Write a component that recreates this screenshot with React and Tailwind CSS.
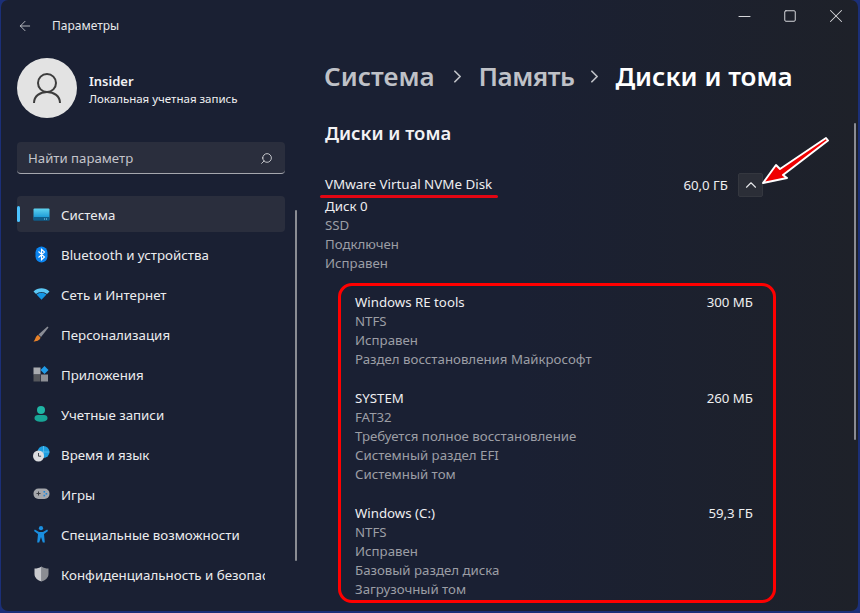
import { ChevronRight, ChevronUp, ArrowLeft, Search, Minus, Square, X } from 'lucide-react';

const font = 'font-["Noto_Sans","Open_Sans",sans-serif]';

const SystemIcon = () => (
  <svg width="17" height="13" viewBox="0 0 17 13">
    <defs>
      <linearGradient id="sys" x1="0" y1="0" x2="0" y2="1">
        <stop offset="0" stopColor="#5fd3f0" />
        <stop offset="0.7" stopColor="#1f9ed8" />
        <stop offset="1" stopColor="#10577f" />
      </linearGradient>
    </defs>
    <rect width="16" height="12" x="0.5" y="0.5" rx="1" fill="url(#sys)" />
    <rect x="0.5" y="9" width="16" height="3.5" fill="#0f5f8c" />
    <rect x="11" y="10.5" width="1" height="1" fill="#8fd8f0" />
    <rect x="13" y="10.5" width="1" height="1" fill="#8fd8f0" />
  </svg>
);

const BluetoothIcon = () => (
  <svg width="13" height="17" viewBox="0 0 13 17">
    <rect width="12" height="16" x="0.5" y="0.5" rx="6" fill="#0a84f0" />
    <path d="M3.5 5.5l6 5.5-3 2.7V3.3l3 2.7-6 5.5" fill="none" stroke="#fff" strokeWidth="1.1" />
  </svg>
);

const WifiIcon = () => (
  <svg width="17" height="12" viewBox="0 0 17 12">
    <path d="M0.5 3.5C5 -0.8 12 -0.8 16.5 3.5L14 6C10.8 3.2 6.2 3.2 3 6z" fill="#5cc8f5" />
    <path d="M3.5 6.5C6.4 4 10.6 4 13.5 6.5L8.5 11.8z" fill="#1597e5" />
  </svg>
);

const BrushIcon = () => (
  <svg width="16" height="16" viewBox="0 0 16 16">
    <path d="M14.5 0.5L15.5 1.5L8 11L5.5 8.5z" fill="#8a8d96" />
    <path d="M5 9L7.5 11.5C7 14.5 3 15.5 0.5 15.5C2.5 14 2.5 10 5 9z" fill="#e8822a" />
  </svg>
);

const AppsIcon = () => (
  <svg width="16" height="16" viewBox="0 0 16 16">
    <rect x="0.5" y="1.5" width="7" height="7" fill="#a9abb0" />
    <rect x="0.5" y="8.5" width="7" height="7" fill="#55575c" />
    <rect x="8" y="8.5" width="7" height="7" fill="#8e9096" />
    <path d="M11.5 0L15.5 4L11.5 8L7.5 4z" fill="#1f9be8" />
  </svg>
);

const UserIcon = () => (
  <svg width="14" height="16" viewBox="0 0 14 16">
    <circle cx="7" cy="4" r="4" fill="#1fb5a5" />
    <path d="M0.5 12C0.5 10 2 9 4 9H10C12 9 13.5 10 13.5 12C13.5 14.5 11 15.8 7 15.8C3 15.8 0.5 14.5 0.5 12z" fill="#18a596" />
  </svg>
);

const TimeIcon = () => (
  <svg width="17" height="16" viewBox="0 0 17 16">
    <circle cx="10.5" cy="6" r="6" fill="#1f9fe0" />
    <path d="M10.5 0v12M4.5 6h12" stroke="#7ccdf2" strokeWidth="0.6" />
    <circle cx="5.5" cy="10" r="5.5" fill="#dcdde0" />
    <path d="M5.5 7v3.2h2.6" fill="none" stroke="#44464c" strokeWidth="1" />
  </svg>
);

const GamesIcon = () => (
  <svg width="17" height="12" viewBox="0 0 17 12">
    <rect x="0.5" y="0.5" width="16" height="10.5" rx="5" fill="#a5a7ac" />
    <path d="M3.5 5.5h4M5.5 3.5v4" stroke="#3b3d42" strokeWidth="1" />
    <rect x="10.5" y="3" width="1.6" height="1.6" fill="#1f85d8" />
    <rect x="12.6" y="5" width="1.6" height="1.6" fill="#1f85d8" />
    <rect x="10.5" y="6.8" width="1.6" height="1.6" fill="#1f85d8" />
  </svg>
);

const AccessIcon = () => (
  <svg width="14" height="17" viewBox="0 0 14 17">
    <circle cx="7" cy="2.2" r="2.1" fill="#1a8fe0" />
    <path d="M0.8 3.5L5 6H9L13.2 3.5L14 5L10 8L10.8 16.5H8.8L7 11L5.2 16.5H3.2L4 8L0 5z" fill="#1a8fe0" />
  </svg>
);

const ShieldIcon = () => (
  <svg width="15" height="16" viewBox="0 0 15 16">
    <path d="M7.5 0.5C9.5 2 12 2.5 14.5 2.5V8C14.5 12 11 14.5 7.5 15.5z" fill="#8b8d93" />
    <path d="M7.5 0.5C5.5 2 3 2.5 0.5 2.5V8C0.5 12 4 14.5 7.5 15.5z" fill="#c9cace" />
  </svg>
);

const navItems = [
  { label: 'Система', icon: <SystemIcon />, active: true },
  { label: 'Bluetooth и устройства', icon: <BluetoothIcon /> },
  { label: 'Сеть и Интернет', icon: <WifiIcon /> },
  { label: 'Персонализация', icon: <BrushIcon /> },
  { label: 'Приложения', icon: <AppsIcon /> },
  { label: 'Учетные записи', icon: <UserIcon /> },
  { label: 'Время и язык', icon: <TimeIcon /> },
  { label: 'Игры', icon: <GamesIcon /> },
  { label: 'Специальные возможности', icon: <AccessIcon /> },
  { label: 'Конфиденциальность и безопас', icon: <ShieldIcon /> },
];

const partitions = [
  {
    name: 'Windows RE tools',
    size: '300 МБ',
    lines: ['NTFS', 'Исправен', 'Раздел восстановления Майкрософт'],
  },
  {
    name: 'SYSTEM',
    size: '260 МБ',
    lines: ['FAT32', 'Требуется полное восстановление', 'Системный раздел EFI', 'Системный том'],
  },
  {
    name: 'Windows (C:)',
    size: '59,3 ГБ',
    lines: ['NTFS', 'Исправен', 'Базовый раздел диска', 'Загрузочный том'],
  },
];

function NavItem({ item }) {
  return (
    <div
      className={`relative mb-1 flex h-9 w-[268px] shrink-0 items-center rounded ${
        item.active ? 'bg-[#2a2e3d]' : ''
      }`}
    >
      {item.active ? (
        <span className="absolute left-0 top-[10px] h-4 w-[3px] rounded bg-[#4cc2ff]" />
      ) : null}
      <span className="flex w-[44px] shrink-0 justify-center pl-[4px]">{item.icon}</span>
      <span className="w-[204px] overflow-hidden whitespace-nowrap pt-[4px] text-[13.3px] text-[#ececee]">
        {item.label}
      </span>
    </div>
  );
}

function Sidebar() {
  return (
    <aside className="flex w-[299px] shrink-0 flex-col pl-[16px]">
      <div className="flex h-[51px] items-center">
        <ArrowLeft size={16} strokeWidth={1.2} className="text-[#d8d9dd]" />
        <span className="ml-[19px] text-[12px] text-[#e6e7ea]">Параметры</span>
      </div>
      <div className="mt-[7px] flex items-center">
        <div className="flex h-[60px] w-[60px] items-center justify-center rounded-full bg-[#e3e3e3]">
          <svg width="28" height="31" viewBox="0 0 28 31" fill="none" stroke="#3d3d3d" strokeWidth="2">
            <circle cx="14" cy="10" r="9" />
            <path d="M1 30C1 23 7 19 14 19C21 19 27 23 27 30" />
          </svg>
        </div>
        <div className="ml-[12px] pt-[2px]">
          <div className="text-[13px] font-semibold leading-[18px] text-[#f2f2f4]">Insider</div>
          <div className="text-[11.5px] leading-[17px] text-[#f0f0f2]">Локальная учетная запись</div>
        </div>
      </div>
      <div className="mt-[24px] flex h-[32px] w-[268px] items-center justify-between rounded border-b border-b-[#a5a7ae] bg-[#2a2e3d] pl-[11px] pr-[12px] pt-[2px]">
        <span className="text-[13.2px] text-[#c4c5cb]">Найти параметр</span>
        <Search size={13} strokeWidth={1.5} className="-scale-x-100 text-[#e4e5e8]" />
      </div>
      <nav className="mt-[22px] flex flex-col">
        {navItems.map((item) => (
          <NavItem key={item.label} item={item} />
        ))}
      </nav>
    </aside>
  );
}

function InfoBlock({ name, size, lines }) {
  return (
    <div className="mb-[20px] flex justify-between">
      <div>
        <div className="h-[19px] text-[#eeeef0]">{name}</div>
        {lines.map((line, i) => (
          <div key={i} className="h-[19px] text-[#9c9ea5]">
            {line}
          </div>
        ))}
      </div>
      <div className="text-[#eeeef0]">{size}</div>
    </div>
  );
}

function Content() {
  return (
    <main className="min-w-0 flex-1 pl-[25px] text-[13.25px] leading-[19px]">
      <div className="-ml-[1px] mt-[58px] flex h-[36px] items-center whitespace-nowrap text-[26px] font-semibold leading-[36px]">
        <span className="text-[#bfc1c7]">Система</span>
        <ChevronRight size={21} strokeWidth={2} className="ml-[12px] mr-[11px] text-[#bfc1c7]" />
        <span className="tracking-[-0.5px] text-[#bfc1c7]">Память</span>
        <ChevronRight size={21} strokeWidth={2} className="mx-[10px] text-[#bfc1c7]" />
        <span className="text-white">Диски и тома</span>
      </div>
      <h2 className="mt-[27px] text-[18.5px] font-semibold leading-[24px] text-[#f2f2f4]">Диски и тома</h2>

      <div className="mt-[28px] flex w-[438px] items-start justify-between">
        <div className="h-[22px] text-[13.4px] leading-[22px] text-[#eeeef0]">VMware Virtual NVMe Disk</div>
        <div className="flex items-center gap-[10px]">
          <span className="leading-[22px] text-[#eeeef0]">60,0 ГБ</span>
          <span className="flex h-6 w-[25px] items-center justify-center rounded-[2px] border border-[#34373f] bg-[#2b2e37]">
            <ChevronUp size={18} strokeWidth={1.5} className="text-[#e6e7ea]" />
          </span>
        </div>
      </div>
      <div className="h-[19px] text-[#eeeef0]">Диск 0</div>
      <div className="h-[19px] text-[#9c9ea5]">SSD</div>
      <div className="h-[19px] text-[#9c9ea5]">Подключен</div>
      <div className="h-[19px] text-[#9c9ea5]">Исправен</div>

      <section className="ml-[13px] mt-[10px] h-[320px] w-[438px] rounded-[14px] border-[3px] border-[#ff0000] pl-[14px] pr-[20px] pt-[7px]">
        {partitions.map((p) => (
          <InfoBlock key={p.name} {...p} />
        ))}
      </section>
    </main>
  );
}

export default function App() {
  return (
    <div className={`h-[613px] w-[860px] overflow-hidden bg-[#1b2f78] ${font}`}>
      <div className="relative ml-[1px] flex h-[611px] w-[857px] rounded-[7px] bg-[linear-gradient(90deg,#1a2033_0%,#1a2033_60%,#1e2129_100%)]">
        <Sidebar />
        <Content />

        {/* window controls */}
        <div className="absolute right-[-1px] top-[4px] flex text-[#d8d9dd]">
          <span className="flex h-6 w-[46px] items-center justify-center">
            <Minus size={19} strokeWidth={1.25} />
          </span>
          <span className="flex h-6 w-[46px] items-center justify-center">
            <Square size={14} strokeWidth={1.7} />
          </span>
          <span className="flex h-6 w-[46px] items-center justify-center">
            <X size={22} strokeWidth={1.1} />
          </span>
        </div>

        {/* scrollbars */}
        <div className="absolute left-[294px] top-[210px] h-[351px] w-[2px] rounded bg-[#8a8c93]" />
        <div className="absolute left-[853px] top-[123px] h-[317px] w-[2px] rounded bg-[#8a8c93]" />

        {/* red annotations */}
        <div className="absolute left-[319px] top-[195px] h-[3px] w-[178px] rounded bg-[#e30613]" />
        <svg className="absolute left-[754px] top-[132px]" width="80" height="60" viewBox="0 0 80 60">
          <path
            d="M8 51L21 33L25 37L71 6L73 8.5L28 43L32 46z"
            fill="#f00000"
            stroke="#fff"
            strokeWidth="2"
            strokeLinejoin="round"
          />
        </svg>
      </div>
    </div>
  );
}
